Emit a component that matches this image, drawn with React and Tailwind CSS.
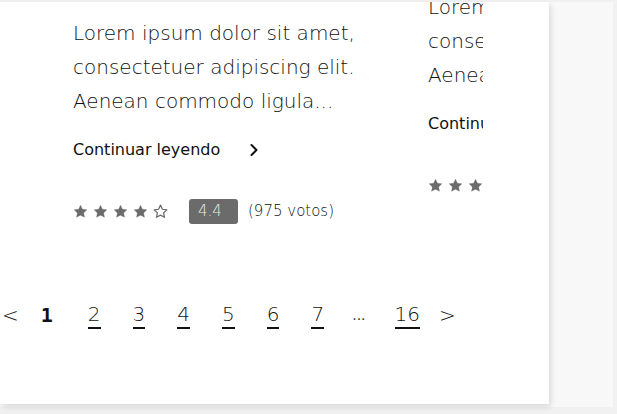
import { ChevronRight } from 'lucide-react';

const STAR = 'M12 1.8l3.1 6.6 7.1.9-5.2 4.9 1.4 7.1L12 17.8l-6.4 3.5 1.4-7.1-5.2-4.9 7.1-.9z';

function Stars({ count = 5, filled = 5 }) {
  return (
    <div className="flex items-center gap-[5px]">
      {Array.from({ length: count }).map((_, i) => (
        <svg key={i} width="15" height="15" viewBox="0 0 24 24">
          <path
            d={STAR}
            fill={i < filled ? '#6b6b6b' : 'none'}
            stroke="#6b6b6b"
            strokeWidth={i < filled ? 0.5 : 2}
            strokeLinejoin="round"
          />
        </svg>
      ))}
    </div>
  );
}

function Article({ partial }) {
  return (
    <div className="font-['DejaVu_Sans',sans-serif] text-[#111]">
      <p className="text-[20px] leading-[34px] font-extralight whitespace-nowrap">
        Lorem ipsum dolor sit amet,
        <br />
        consectetuer adipiscing elit.
        <br />
        Aenean commodo ligula...
      </p>
      <a className="mt-[20px] flex items-center text-[16px] text-[#111] whitespace-nowrap">
        Continuar leyendo
        <ChevronRight size={20} strokeWidth={2.4} className="ml-[24px]" />
      </a>
      <div className="mt-[37px] h-[25px] flex items-center">
        {partial ? (
          <Stars count={5} filled={5} />
        ) : (
          <>
            <Stars count={5} filled={4} />
            <span className="ml-[21px] h-[25px] w-[49px] rounded-[3px] bg-[#6b6b6b] text-[#e8e8e8] text-[15px] font-extralight leading-[25px] pl-[9px]">
              4.4
            </span>
            <span className="ml-[10px] text-[15px] font-extralight text-[#111]">(975 votos)</span>
          </>
        )}
      </div>
    </div>
  );
}

const pages = ['2', '3', '4', '5', '6', '7'];

export default function App() {
  return (
    <div className="w-[617px] h-[414px] bg-[#f1f1f1] overflow-hidden">
      <div className="mt-[2px] w-[613px] h-[405px] bg-[#f8f8f8]">
        <div className="w-[549px] h-[402px] bg-white shadow-[2px_3px_6px_rgba(0,0,0,0.12)] overflow-hidden">
          <div className="flex items-start pt-[14px]">
            <div className="pl-[73px] w-[428px] shrink-0">
              <Article />
            </div>
            <div className="w-[55px] shrink-0 overflow-hidden -mt-[26px]">
              <Article partial />
            </div>
          </div>

          <nav className="mt-[76px] flex items-center font-['DejaVu_Sans',sans-serif] text-[20px] font-extralight text-[#111]">
            <span className="ml-[2px]">&lt;</span>
            <span className="ml-[22px] font-['DejaVu_Sans_Mono',monospace] font-bold text-[20px] text-[#111]">1</span>
            {pages.map((p, i) => (
              <span
                key={p}
                className={`${i === 0 ? 'ml-[35px]' : 'ml-[32px]'} border-b-2 border-[#111] leading-[26px]`}
              >
                {p}
              </span>
            ))}
            <span className="ml-[28px] text-[14px] font-normal text-[#333]">...</span>
            <span className="ml-[29px] border-b-2 border-[#111] leading-[26px]">16</span>
            <span className="ml-[19px]">&gt;</span>
          </nav>
        </div>
      </div>
    </div>
  );
}
